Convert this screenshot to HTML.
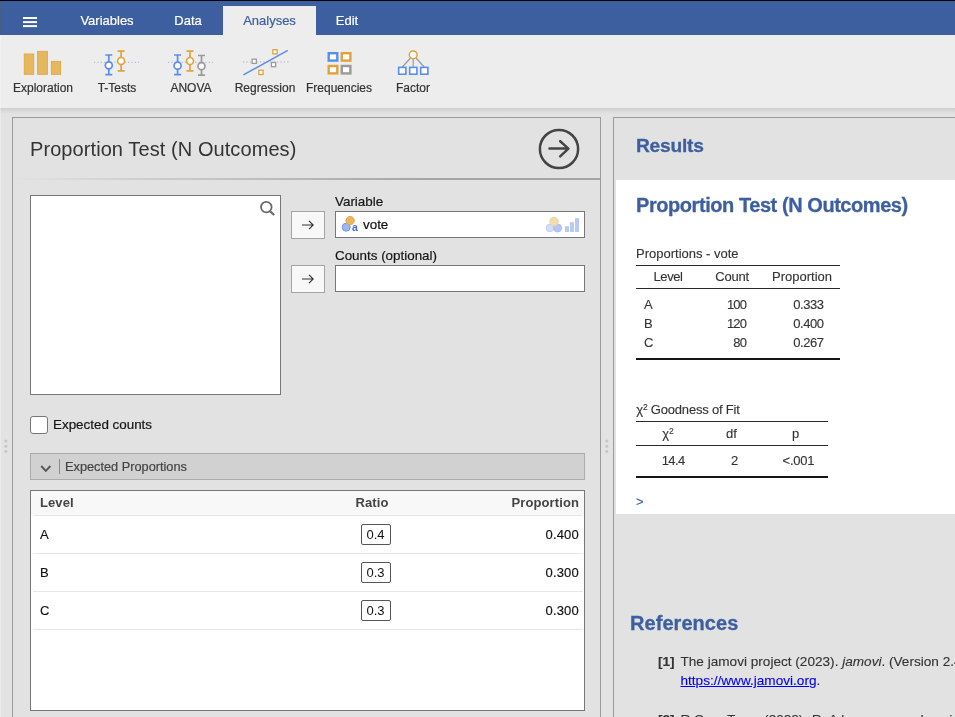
<!DOCTYPE html>
<html><head><meta charset="utf-8">
<style>
*{box-sizing:border-box;margin:0;padding:0}
html,body{width:955px;height:717px;overflow:hidden;background:#e3e3e3;font-family:"Liberation Sans",sans-serif;}
body{position:relative}
.abs{position:absolute}
#topline{left:0;top:0;width:955px;height:1px;background:#000}
#header{left:0;top:1px;width:955px;height:34px;background:#3e5f9f}
.tab{-webkit-text-stroke:.2px;position:absolute;top:0;height:34px;line-height:40px;color:#fff;font-size:13px;text-align:center;white-space:nowrap}
#ribbon{left:0;top:35px;width:955px;height:73px;background:#ededed}
#ribshadow{left:0;top:108px;width:955px;height:6px;background:linear-gradient(#cfcfcf,#e3e3e3)}
.rlabel{-webkit-text-stroke:.2px;position:absolute;top:81px;font-size:12px;color:#333;text-align:center;width:100px;white-space:nowrap}
#lpanel{left:12px;top:117px;width:589px;height:610px;border:1px solid #9a9a9a;background:#e2e2e2}
#rpanel{left:613px;top:117px;width:360px;height:610px;border:1px solid #9a9a9a;background:#e2e2e2}
.txt{position:absolute;white-space:nowrap}

#title{left:30px;top:138px;font-size:20px;color:#333;letter-spacing:.08px}
#sep{left:13px;top:178px;width:587px;height:2px;background:linear-gradient(90deg,rgba(170,170,170,0) 0%,rgba(170,170,170,.25) 15%,rgba(165,165,165,1) 70%)}
.box{position:absolute;background:#fff;border:1px solid #777}
.abtn{position:absolute;width:34px;height:28px;background:#f8f8f8;border:1px solid #a4a4a4}
.lbl{position:absolute;font-size:13.4px;color:#151515;-webkit-text-stroke:.2px;white-space:nowrap}
#coll{left:30px;top:453px;width:555px;height:27px;background:#d1d1d1;border:1px solid #acacac}
#tbl{left:30px;top:490px;width:555px;height:221px;background:#fff;border:1px solid #777}
.th{position:absolute;top:0px;height:24px;background:#f8f8f8;font-weight:bold;font-size:13px;color:#444;line-height:24px;letter-spacing:.1px}
.rowline{position:absolute;left:2px;height:1px;background:#e6e6e6;width:550px}
.cell{-webkit-text-stroke:.15px;position:absolute;font-size:13px;color:#111;white-space:nowrap}
.rbox{position:absolute;left:330px;padding-right:1px;width:30px;height:21px;border:1px solid #555;border-radius:2px;background:#fff;font-size:13px;text-align:center;line-height:19px;color:#111}

.h1{-webkit-text-stroke:.3px;position:absolute;font-weight:bold;color:#3e5f9f;white-space:nowrap}
#white{left:616px;top:180px;width:340px;height:334px;background:#fff}
.rt{-webkit-text-stroke:.12px;position:absolute;font-size:13px;color:#333;white-space:nowrap}
.hl{position:absolute;background:#2a2a2a}
</style></head><body>
<div id="root" style="position:absolute;left:0;top:0;width:955px;height:717px;will-change:transform;overflow:hidden">
<div id="topline" class="abs"></div>
<div class="abs" style="left:0;top:1px;width:1px;height:34px;background:rgba(90,90,90,.35);z-index:5"></div><div class="abs" style="left:0;top:35px;width:1px;height:682px;background:rgba(255,255,255,.3);z-index:5"></div>
<div id="header" class="abs">
 <svg class="abs" style="left:23px;top:16px" width="14" height="11"><rect x="0" y="0" width="14" height="2" fill="#fff"/><rect x="0" y="4.1" width="14" height="2" fill="#fff"/><rect x="0" y="8.1" width="14" height="2" fill="#fff"/></svg>
 <div class="tab" style="left:67px;width:80px">Variables</div>
 <div class="tab" style="left:158px;width:60px">Data</div>
 <div class="tab" style="left:223px;width:93px;top:5px;height:29px;line-height:30px;background:#ededed;color:#3e5f9f">Analyses</div>
 <div class="tab" style="left:317px;width:60px">Edit</div>
</div>
<div id="ribbon" class="abs"></div>
<div id="ribshadow" class="abs"></div>
<div class="rlabel" style="left:-7px">Exploration</div>
<div class="rlabel" style="left:67px">T-Tests</div>
<div class="rlabel" style="left:141px">ANOVA</div>
<div class="rlabel" style="left:215px">Regression</div>
<div class="rlabel" style="left:289px">Frequencies</div>
<div class="rlabel" style="left:363px">Factor</div>

<svg class="abs" style="left:0;top:35px" width="480" height="73" viewBox="0 35 480 73">
 <!-- exploration -->
 <g fill="#e5b860" stroke="#e2ab48" stroke-width="1">
  <rect x="24.3" y="54" width="9.4" height="20.3"/>
  <rect x="37.6" y="51.4" width="9.8" height="22.9"/>
  <rect x="51.4" y="61.4" width="9.2" height="12.9"/>
 </g>
 <!-- t-tests -->
 <line x1="94" y1="62.3" x2="139" y2="62.3" stroke="#9db4d8" stroke-width="1" stroke-dasharray="1.2 2.2"/>
 <g stroke="#5a8dee" stroke-width="1.7" fill="none">
  <path d="M105.3 55h7M108.8 55v19.6M105.3 74.6h7"/>
  <circle cx="108.8" cy="65.3" r="3.5" fill="#fff"/>
 </g>
 <g stroke="#e0a33c" stroke-width="1.7" fill="none">
  <path d="M117.6 51.2h7M121.1 51.2v19.6M117.6 70.8h7"/>
  <circle cx="121.1" cy="61" r="3.5" fill="#fff"/>
 </g>
 <!-- anova -->
 <line x1="168" y1="62.3" x2="213" y2="62.3" stroke="#9db4d8" stroke-width="1" stroke-dasharray="1.2 2.2"/>
 <g stroke="#5a8dee" stroke-width="1.7" fill="none">
  <path d="M174.1 55h7M177.6 55v19.6M174.1 74.6h7"/>
  <circle cx="177.6" cy="65.7" r="3.5" fill="#fff"/>
 </g>
 <g stroke="#e0a33c" stroke-width="1.7" fill="none">
  <path d="M186.5 51.2h7M190 51.2v19.6M186.5 70.8h7"/>
  <circle cx="190" cy="61" r="3.5" fill="#fff"/>
 </g>
 <g stroke="#9a9a9a" stroke-width="1.7" fill="none">
  <path d="M198 55.5h7M201.5 55.5v19.6M198 75.1h7"/>
  <circle cx="201.5" cy="66.2" r="3.5" fill="#fff"/>
 </g>
 <!-- regression -->
 <line x1="243" y1="62" x2="288.5" y2="62" stroke="#9db4d8" stroke-width="1" stroke-dasharray="1.2 2.2"/>
 <line x1="243.4" y1="74.9" x2="287.8" y2="50.3" stroke="#5a8dee" stroke-width="1.5"/>
 <g fill="#fff" stroke-width="1.3">
  <rect x="272.9" y="49.7" width="4.2" height="4.2" stroke="#e0a33c"/>
  <rect x="252.1" y="59.2" width="4.2" height="4.2" stroke="#9a9a9a"/>
  <rect x="271.4" y="62.5" width="4.2" height="4.2" stroke="#9a9a9a"/>
  <rect x="258.9" y="70.3" width="4.2" height="4.2" stroke="#e0a33c"/>
 </g>
 <!-- frequencies -->
 <g fill="#fff" stroke-width="2.4">
  <rect x="328.7" y="53.2" width="8.6" height="7.4" stroke="#5a8dee"/>
  <rect x="341.8" y="53.2" width="8.6" height="7.4" stroke="#e0a33c"/>
  <rect x="328.7" y="66" width="8.6" height="7.4" stroke="#e0a33c"/>
  <rect x="341.8" y="66" width="8.6" height="7.4" stroke="#9a9a9a"/>
 </g>
 <!-- factor -->
 <g stroke="#9a9a9a" stroke-width="1.2" fill="none">
  <path d="M413.2 55v12M410.5 58l-8.2 9M416 58l8.2 9"/>
 </g>
 <circle cx="413.2" cy="54.8" r="3.9" fill="#fff" stroke="#e0a33c" stroke-width="1.5"/>
 <g fill="#fff" stroke="#5a8dee" stroke-width="1.6">
  <rect x="398.7" y="67.4" width="7.2" height="6.8"/>
  <rect x="409.7" y="67.4" width="7.2" height="6.8"/>
  <rect x="420.7" y="67.4" width="7.2" height="6.8"/>
 </g>
</svg>
<div id="lpanel" class="abs"></div>
<div id="rpanel" class="abs"></div>

<div id="title" class="txt">Proportion Test (N Outcomes)</div>
<svg class="abs" style="left:536px;top:126px" width="46" height="46" viewBox="536 126 46 46"><circle cx="559" cy="149" r="19.1" fill="none" stroke="#444" stroke-width="2.5"/><path d="M549.5 148.6H568M560.2 141.2l8.2 7.4-8.2 7.8" fill="none" stroke="#444" stroke-width="2.5" stroke-linecap="round" stroke-linejoin="round"/></svg>
<div id="sep" class="abs"></div>
<div class="box" style="left:30px;top:195px;width:251px;height:200px"></div>
<svg class="abs" style="left:256px;top:198px" width="22" height="22" viewBox="256 198 22 22"><circle cx="266.3" cy="207.1" r="5.3" fill="none" stroke="#6a6a6a" stroke-width="1.8"/><path d="M270 211.2l4.2 3.8" stroke="#6a6a6a" stroke-width="2.2" stroke-linecap="butt"/></svg>
<div class="abtn" style="left:291px;top:211px"></div>
<div class="abtn" style="left:291px;top:265px"></div>
<svg class="abs" style="left:300px;top:218px" width="16" height="14" viewBox="0 0 16 14"><path d="M2 7h11M9 2.8l4.2 4.2-4.2 4.2" fill="none" stroke="#333" stroke-width="1.15"/></svg>
<svg class="abs" style="left:300px;top:272px" width="16" height="14" viewBox="0 0 16 14"><path d="M2 7h11M9 2.8l4.2 4.2-4.2 4.2" fill="none" stroke="#333" stroke-width="1.15"/></svg>
<div class="lbl" style="left:335px;top:194px">Variable</div>
<div class="box" style="left:335px;top:211px;width:250px;height:27px"></div>
<div class="lbl" style="left:363px;top:217px;color:#111">vote</div>
<svg class="abs" style="left:338px;top:212px" width="246" height="25" viewBox="338 212 246 25">
 <circle cx="346.2" cy="227.2" r="4" fill="#9db7f0" stroke="#6f97ee" stroke-width="1"/>
 <circle cx="350.1" cy="220.6" r="4.2" fill="#e8b95c" stroke="#e0a94a" stroke-width="1"/>
 <text x="352.1" y="230.6" style="font-family:'Liberation Sans',sans-serif;font-weight:bold;font-size:10.5px" fill="#3c6fe0">a</text>
 <circle cx="549.9" cy="228" r="3.8" fill="#d4def6" stroke="#bccdf5" stroke-width="1"/>
 <circle cx="557.6" cy="228" r="4" fill="#b5c6f0" stroke="#a9bef2" stroke-width="1"/>
 <circle cx="554" cy="221.6" r="4.1" fill="#f3ddae" stroke="#efd49b" stroke-width="1"/>
 <g fill="#b8c9f2"><rect x="565" y="226.2" width="4" height="5.8"/><rect x="570" y="222.2" width="4" height="9.8"/><rect x="575" y="218.1" width="4" height="13.9"/></g>
</svg>
<div class="lbl" style="left:335px;top:248px">Counts (optional)</div>
<div class="box" style="left:335px;top:265px;width:250px;height:27px"></div>
<div class="box" style="left:30px;top:416px;width:18px;height:18px;border-radius:3px;border-color:#777"></div>
<div class="lbl" style="left:53px;top:417px">Expected counts</div>
<div id="coll" class="abs"></div>
<svg class="abs" style="left:38px;top:461px" width="16" height="14" viewBox="38 461 16 14"><path d="M41.2 466l4.6 4.8 4.6-4.8" fill="none" stroke="#555" stroke-width="1.9"/></svg>
<div class="abs" style="left:59px;top:459px;width:1px;height:15px;background:#8a8a8a"></div>
<div class="lbl" style="left:65px;top:459px;color:#444;font-size:12.75px">Expected Proportions</div>
<div id="tbl" class="abs">
 <div class="th" style="left:0px;width:317px;padding-left:9px">Level</div>
 <div class="th" style="left:317px;width:80px;text-align:center;padding-right:32px">Ratio</div>
 <div class="th" style="left:397px;width:156px;text-align:right;padding-right:5px">Proportion</div>
 <div class="rowline" style="top:24px"></div>
 <div class="rowline" style="top:62px"></div>
 <div class="rowline" style="top:100px"></div>
 <div class="rowline" style="top:138px"></div>
 <div class="cell" style="left:9px;top:36px">A</div>
 <div class="cell" style="left:9px;top:74px">B</div>
 <div class="cell" style="left:9px;top:112px">C</div>
 <div class="rbox" style="top:33px">0.4</div>
 <div class="rbox" style="top:71px">0.3</div>
 <div class="rbox" style="top:109px">0.3</div>
 <div class="cell" style="right:5px;top:36px;letter-spacing:.2px">0.400</div>
 <div class="cell" style="right:5px;top:74px;letter-spacing:.2px">0.300</div>
 <div class="cell" style="right:5px;top:112px;letter-spacing:.2px">0.300</div>
</div>
<svg class="abs" style="left:0;top:436px" width="12" height="20" viewBox="0 436 12 20"><g fill="#c6c6c6"><circle cx="5.9" cy="441" r="1.5"/><circle cx="5.9" cy="446.2" r="1.5"/><circle cx="5.9" cy="451.4" r="1.5"/></g></svg>
<svg class="abs" style="left:601px;top:436px" width="12" height="20" viewBox="601 436 12 20"><g fill="#c6c6c6"><circle cx="606.8" cy="441" r="1.5"/><circle cx="606.8" cy="446.2" r="1.5"/><circle cx="606.8" cy="451.4" r="1.5"/></g></svg>

<div id="white" class="abs"></div>
<div class="h1" style="left:636px;top:134.5px;font-size:19.2px;letter-spacing:-.25px">Results</div>
<div class="h1" style="left:636px;top:194px;font-size:20px;letter-spacing:-.44px">Proportion Test (N Outcomes)</div>
<div class="rt" style="left:636px;top:246px">Proportions - vote</div>
<div class="hl" style="left:636px;top:265px;width:204px;height:1px"></div>
<div class="rt" style="left:653.5px;top:269px;letter-spacing:-.4px">Level</div>
<div class="rt" style="left:715.3px;top:269px;letter-spacing:-.2px">Count</div>
<div class="rt" style="left:772px;top:269px">Proportion</div>
<div class="hl" style="left:636px;top:288px;width:204px;height:1px"></div>
<div class="rt" style="left:644px;top:297px">A</div>
<div class="rt" style="left:644px;top:316px">B</div>
<div class="rt" style="left:644px;top:335px">C</div>
<div class="rt" style="right:208.8px;top:297px;letter-spacing:-.8px">100</div>
<div class="rt" style="right:208.8px;top:316px;letter-spacing:-.8px">120</div>
<div class="rt" style="right:208.8px;top:335px;letter-spacing:-.8px">80</div>
<div class="rt" style="right:131.6px;top:297px;letter-spacing:-.48px">0.333</div>
<div class="rt" style="right:131.6px;top:316px;letter-spacing:-.48px">0.400</div>
<div class="rt" style="right:131.6px;top:335px;letter-spacing:-.48px">0.267</div>
<div class="hl" style="left:636px;top:358px;width:204px;height:2px;background:#151515"></div>

<div class="rt" style="left:636.3px;top:402px;letter-spacing:-.2px">&chi;<span style="font-size:8.5px;position:relative;top:-4.5px;line-height:0">2</span> Goodness of Fit</div>
<div class="hl" style="left:636px;top:421px;width:192px;height:1px"></div>
<div class="rt" style="left:662.3px;top:426px;letter-spacing:-.2px">&chi;<span style="font-size:8.5px;position:relative;top:-4.5px;line-height:0">2</span></div>
<div class="rt" style="left:726px;top:426px">df</div>
<div class="rt" style="left:792px;top:426px">p</div>
<div class="hl" style="left:636px;top:445px;width:192px;height:1px"></div>
<div class="rt" style="left:661.7px;top:453px;letter-spacing:-.6px">14.4</div>
<div class="rt" style="left:731px;top:453px">2</div>
<div class="rt" style="left:782.5px;top:453px;letter-spacing:-.2px">&lt;.001</div>
<div class="hl" style="left:636px;top:476px;width:192px;height:2px;background:#151515"></div>
<div class="rt" style="left:636px;top:494px;color:#3e5f9f">&gt;</div>

<div class="h1" style="left:630px;top:612px;font-size:20px;letter-spacing:.05px">References</div>
<div class="rt" style="left:658px;top:654px;font-size:13.6px;font-weight:bold">[1]</div>
<div class="rt" style="left:680.5px;top:654px;font-size:13.6px">The jamovi project (2023). <i>jamovi</i>. (Version 2.4) [Computer Software]. Retrieved from</div>
<div class="rt" style="left:680.5px;top:673px;font-size:13.6px"><span style="color:#0000ee;text-decoration:underline">https://www.jamovi.org</span>.</div>
<div class="rt" style="left:658px;top:712px;font-size:13.6px;font-weight:bold">[2]</div>
<div class="rt" style="left:680.5px;top:712px;font-size:13.6px">R Core Team (2022). <i>R: A language and environment for statistical computing</i>.</div>
</div>
</body></html>
